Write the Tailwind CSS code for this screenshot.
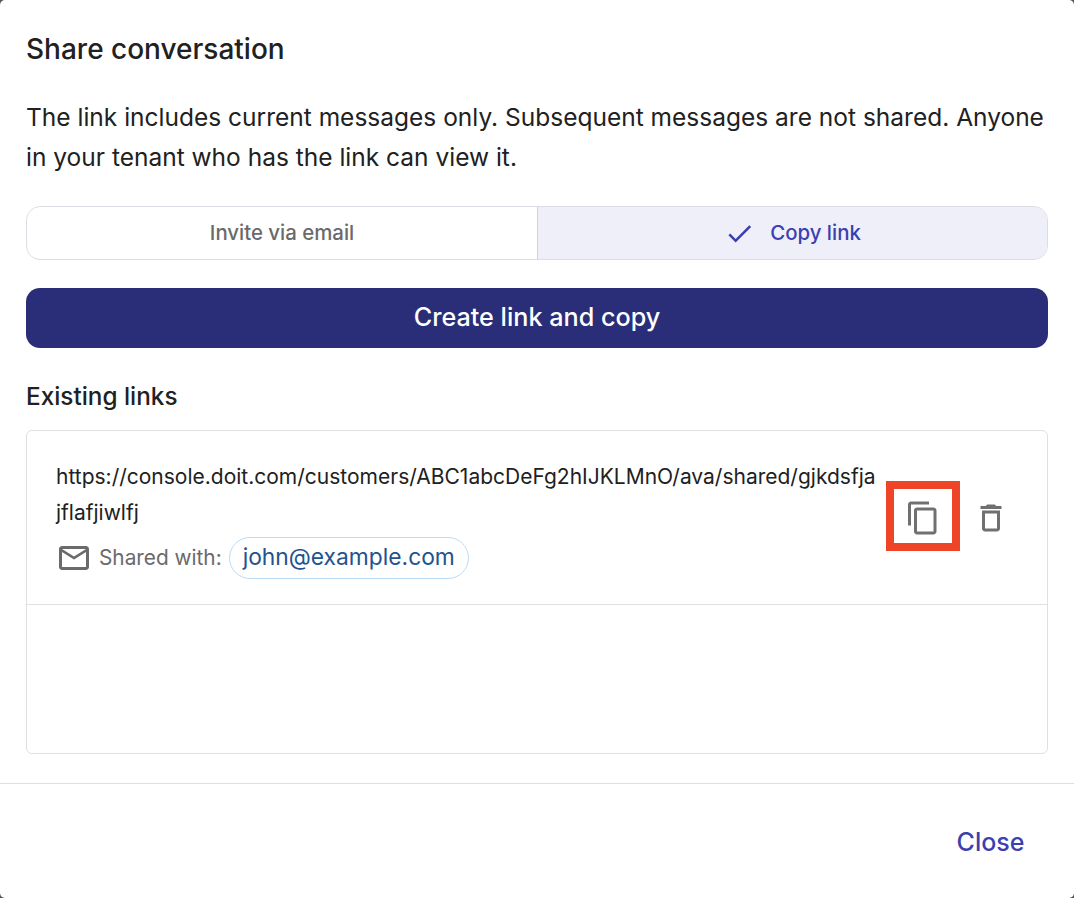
<!DOCTYPE html>
<html><head><meta charset="utf-8"><script src="https://cdn.jsdelivr.net/npm/@tailwindcss/browser@4"></script></head>
<body class="m-0 bg-[#555555]">
<div class="w-[1074px] h-[898px] bg-white rounded-[5px] flex flex-col font-['Inter',sans-serif] text-[#212121] overflow-hidden">
  <div class="flex-1 px-[26px] flex flex-col">
    <h2 class="mt-[31px] text-[28px] leading-[36px] font-medium">Share conversation</h2>
    <p class="mt-[30px] text-[24.5px] leading-[40px]">The link includes current messages only. Subsequent messages are not shared. Anyone in your tenant who has the link can view it.</p>
    <div class="mt-[29px] h-[54px] flex rounded-[14px] border border-[#dcdce4] overflow-hidden text-[20.4px] font-medium">
      <div class="w-[510px] flex items-center justify-center text-[#6a6a6a]">Invite via email</div>
      <div class="flex-1 flex items-center justify-center gap-[15px] bg-[#eeeff9] border-l border-[#d0d0e0] text-[#3b3fb0]">
        <svg width="31" height="31" viewBox="0 0 24 24" fill="currentColor"><path d="M9 16.170 4.830 12l-1.420 1.410L9 19 21 7l-1.410-1.410z"/></svg>
        <span>Copy link</span>
      </div>
    </div>
    <div class="mt-[28px] h-[60px] rounded-[14px] bg-[#2a2d78] text-white text-[25.2px] font-medium flex items-center justify-center">Create link and copy</div>
    <h3 class="mt-[30px] text-[24.3px] leading-[36px] font-medium">Existing links</h3>
    <div class="mt-[16px] h-[324px] rounded-[6px] border border-[#e0e0e0] flex flex-col">
      <div class="h-[174px] border-b border-[#e0e0e0] flex items-center pl-[29px] pr-[38px]">
        <div class="w-[820px] pt-[2px]">
          <div class="text-[21px] leading-[36px] break-all">https://console.doit.com/customers/ABC1abcDeFg2hIJKLMnO/ava/shared/gjkdsfjajflafjiwlfj</div>
          <div class="mt-[6px] flex items-center gap-[7px] text-[#6a6a6a] text-[20.8px]">
            <svg width="36" height="36" viewBox="0 0 24 24" fill="currentColor"><path d="M22 6c0-1.100-.9-2-2-2H4c-1.100 0-2 .9-2 2v12c0 1.100.9 2 2 2h16c1.100 0 2-.9 2-2V6zm-2 0-8 5-8-5h16zm0 12H4V8l8 5 8-5v10z"/></svg>
            <span>Shared with:</span>
            <span class="h-[42px] px-[13px] rounded-full border border-[#bcdcf7] text-[#22538f] text-[22.800px] flex items-center">john@example.com</span>
          </div>
        </div>
        <div class="ml-auto flex items-center gap-[32px] text-[#707070]">
          <svg width="36" height="36" viewBox="0 0 24 24" fill="currentColor"><path d="M16 1H4c-1.100 0-2 .9-2 2v14h2V3h12V1zm3 4H8c-1.100 0-2 .9-2 2v14c0 1.100.9 2 2 2h11c1.100 0 2-.9 2-2V7c0-1.100-.9-2-2-2zm0 16H8V7h11v14z"/></svg>
          <svg width="36" height="36" viewBox="0 0 24 24" fill="currentColor"><path d="M6 19c0 1.100.9 2 2 2h8c1.100 0 2-.9 2-2V7H6v12zM8 9h8v10H8V9zm7.500-5-1-1h-5l-1 1H5v2h14V4h-3.500z"/></svg>
        </div>
      </div>
    </div>
    <div class="absolute left-[886px] top-[481px] w-[74px] h-[70px] border-[8px] border-[#ee4427]"></div>
  </div>
  <div class="h-[115px] border-t border-[#e0e0e0] flex items-center justify-end pr-[49.500px] pt-[4px]">
    <span class="text-[25px] font-medium text-[#3b3fb0]">Close</span>
  </div>
</div>
</body></html>
